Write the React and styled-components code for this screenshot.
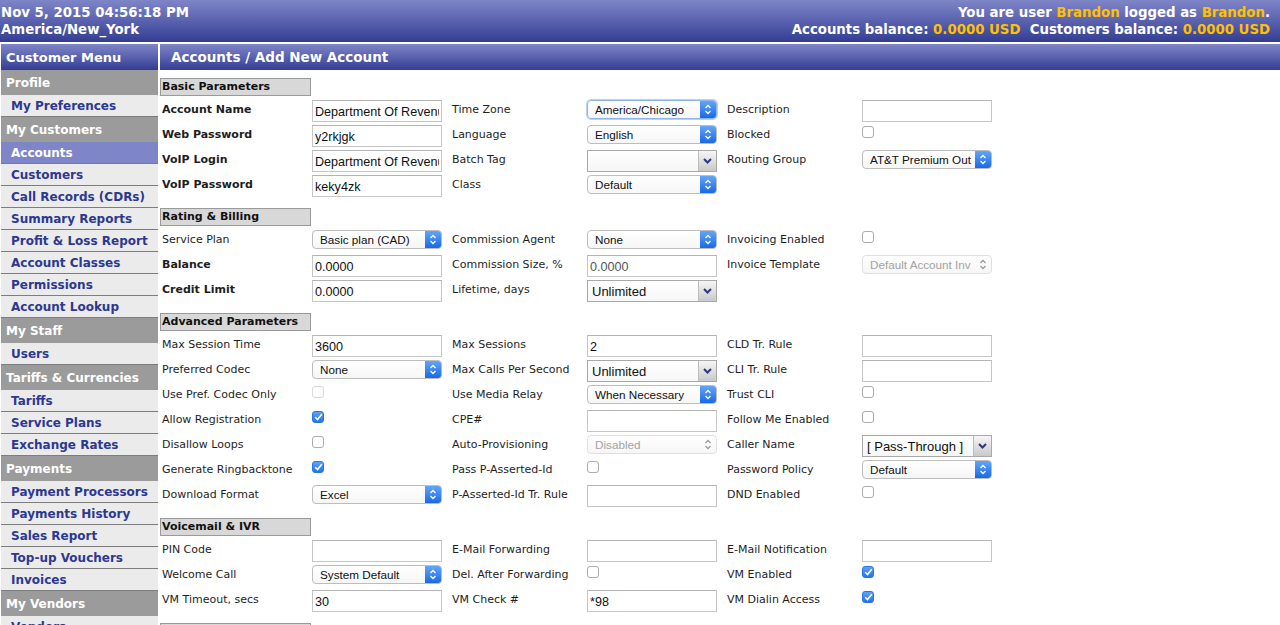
import React from "react";
import styled, { createGlobalStyle, css } from "styled-components";

const GlobalStyle = createGlobalStyle`
  html, body { margin: 0; padding: 0; background: #fff; overflow: hidden; }
  body { font-family: "DejaVu Sans", Verdana, sans-serif; }
`;

const barGradient = css`
  background: linear-gradient(to bottom, #7e85c7 0%, #5a62af 50%, #333d92 100%);
`;

const TopBar = styled.div`
  ${barGradient};
  height: 42px;
  box-sizing: border-box;
  padding: 4px 10px 0 1px;
  display: flex;
  justify-content: space-between;
  color: #fff;
  font-weight: bold;
  font-size: 13.3px;
  line-height: 17px;
`;

const TopRight = styled.div`
  text-align: right;
`;

const Gold = styled.span`
  color: #ffc000;
`;

const Layout = styled.div`
  display: flex;
  gap: 2px;
  margin-top: 2px;
  padding-left: 1px;
`;

const Sidebar = styled.div`
  width: 157px;
  flex: none;
`;

const BarTitle = styled.div`
  ${barGradient};
  height: 26px;
  box-sizing: border-box;
  padding-top: 1px;
  line-height: 25px;
  color: #fff;
  font-weight: bold;
  font-size: ${(p) => p.$size}px;
  padding-left: ${(p) => p.$pad}px;
`;

const MenuHeader = styled.div`
  height: 25px;
  box-sizing: border-box;
  padding-top: 1px;
  line-height: 24px;
  background: #9b9b9b;
  color: #fff;
  font-weight: bold;
  font-size: 12px;
  padding-left: 5px;
`;

const MenuItem = styled.div`
  height: 22px;
  box-sizing: border-box;
  padding-top: 1px;
  line-height: 20px;
  border-bottom: 1px solid #7d7d7d;
  background: ${(p) => (p.$active ? "#7f86c8" : "#ebebeb")};
  color: ${(p) => (p.$active ? "#fff" : "#2c3892")};
  font-weight: bold;
  font-size: 12px;
  padding-left: 10px;
`;

const Main = styled.div`
  flex: 1;
`;

const Content = styled.div`
  padding-top: 8px;
`;

const SectionTitle = styled.div`
  width: 151px;
  height: 18px;
  box-sizing: border-box;
  border: 1px solid #9a9a9a;
  background: #d8d8d8;
  color: #111;
  font-weight: bold;
  font-size: 11px;
  line-height: 16px;
  padding-left: 1px;
  margin-bottom: 1px;
`;

const Grid = styled.div`
  display: grid;
  grid-template-columns: 152px 138px 137px 138px 137px 140px;
  grid-auto-rows: 25px;
  align-items: center;
  margin-bottom: 11px;
`;

const Label = styled.div`
  font-size: 11px;
  color: #1e1e1e;
  font-weight: ${(p) => (p.$bold ? "bold" : "normal")};
  padding-left: 2px;
  white-space: nowrap;
`;

const TextInput = styled.input`
  width: 130px;
  height: 22px;
  box-sizing: border-box;
  border: 1px solid #c6c6c6;
  border-top-color: #b4b4b4;
  padding: 3px 2px 0;
  margin: 2px 0 0;
  font-family: "Liberation Sans", Arial, sans-serif;
  font-size: 12.6px;
  color: ${(p) => (p.$muted ? "#555" : "#111")};
  background: #fff;
  outline: none;
`;

const SelectBox = styled.div`
  width: 130px;
  height: ${(p) => (p.$kind === "combo" ? 22 : 19)}px;
  box-sizing: border-box;
  display: flex;
  align-items: stretch;
  margin-top: ${(p) => (p.$kind === "combo" ? 3 : 0)}px;
  border: 1px solid ${(p) => (p.$kind === "combo" ? "#a9a9a9" : p.$kind === "disabled" ? "#e0e0e0" : p.$focus ? "#8fb3ea" : "#bdbdbd")};
  border-radius: ${(p) => (p.$kind === "combo" ? 0 : 4)}px;
  box-shadow: ${(p) => (p.$focus ? "0 0 0 1px #b8d0f4" : "none")};
  background: linear-gradient(to bottom, #fff, #f6f6f6);
  font-family: "Liberation Sans", Arial, sans-serif;
  font-size: ${(p) => (p.$kind === "combo" ? 13 : 11.7)}px;
  color: ${(p) => (p.$kind === "disabled" ? "#a3a3a3" : "#111")};
  overflow: hidden;
`;

const SelectText = styled.span`
  flex: 1;
  display: flex;
  align-items: center;
  padding-left: ${(p) => (p.$combo ? 4 : 7)}px;
  white-space: nowrap;
  overflow: hidden;
`;

const Stepper = styled.span`
  width: 16px;
  flex: none;
  display: flex;
  align-items: center;
  justify-content: center;
  background: ${(p) => (p.$gray ? "transparent" : "linear-gradient(to bottom, #62a6fa, #1a69e6)")};
`;

const ComboButton = styled.span`
  width: 17px;
  flex: none;
  display: flex;
  align-items: center;
  justify-content: center;
  border-left: 1px solid #bcbcbc;
  background: linear-gradient(to bottom, #f6f6f6, #c9c9c9);
`;

const Check = styled.span`
  width: 12px;
  height: 12px;
  box-sizing: border-box;
  margin-bottom: 6px;
  border-radius: 3px;
  display: flex;
  align-items: center;
  justify-content: center;
  border: 1px solid ${(p) => (p.$on ? "#2a74dc" : p.$disabled ? "#dadada" : "#acacac")};
  background: ${(p) => (p.$on ? "linear-gradient(to bottom, #5ea3f8, #2473ea)" : "#fff")};
`;

const UpDown = ({ color }) => (
  <svg width="8" height="11" viewBox="0 0 8 11">
    <path d="M1.5 4 L4 1.5 L6.5 4 M1.5 7 L4 9.5 L6.5 7" fill="none" stroke={color} strokeWidth="1.3" />
  </svg>
);

const Select = ({ value = "", kind = "mac", focus }) => {
  if (kind === "combo") {
    return (
      <SelectBox $kind="combo">
        <SelectText $combo>{value}</SelectText>
        <ComboButton>
          <svg width="9" height="6" viewBox="0 0 9 6">
            <path d="M1 1 L4.5 4.5 L8 1" fill="none" stroke="#2b3a7c" strokeWidth="2" />
          </svg>
        </ComboButton>
      </SelectBox>
    );
  }
  return (
    <SelectBox $kind={kind} $focus={focus}>
      <SelectText>{value}</SelectText>
      <Stepper $gray={kind === "disabled"}>
        <UpDown color={kind === "disabled" ? "#9a9a9a" : "#fff"} />
      </Stepper>
    </SelectBox>
  );
};

const Checkbox = ({ on, disabled }) => (
  <Check $on={on} $disabled={disabled}>
    {on && (
      <svg width="9" height="8" viewBox="0 0 9 8">
        <path d="M1.2 4.2 L3.5 6.5 L7.8 1.2" fill="none" stroke="#fff" strokeWidth="1.6" />
      </svg>
    )}
  </Check>
);

const Field = ({ f }) => {
  if (!f) return <span />;
  switch (f.t) {
    case "input":
      return <TextInput defaultValue={f.v || ""} $muted={f.muted} />;
    case "select":
      return <Select value={f.v} kind={f.kind} focus={f.focus} />;
    case "check":
      return <Checkbox on={f.on} disabled={f.disabled} />;
    default:
      return <span />;
  }
};

const menu = [
  { head: "Profile", items: ["My Preferences"] },
  {
    head: "My Customers",
    items: ["Accounts", "Customers", "Call Records (CDRs)", "Summary Reports", "Profit & Loss Report", "Account Classes", "Permissions", "Account Lookup"],
  },
  { head: "My Staff", items: ["Users"] },
  { head: "Tariffs & Currencies", items: ["Tariffs", "Service Plans", "Exchange Rates"] },
  { head: "Payments", items: ["Payment Processors", "Payments History", "Sales Report", "Top-up Vouchers", "Invoices"] },
  { head: "My Vendors", items: ["Vendors"] },
];

const inp = (v, extra) => ({ t: "input", v, ...extra });
const sel = (v, kind = "mac", extra) => ({ t: "select", v, kind, ...extra });
const chk = (on, extra) => ({ t: "check", on, ...extra });

const sections = [
  {
    title: "Basic Parameters",
    rows: [
      [["Account Name", inp("Department Of Revenue"), true], ["Time Zone", sel("America/Chicago", "mac", { focus: true })], ["Description", inp("")]],
      [["Web Password", inp("y2rkjgk"), true], ["Language", sel("English")], ["Blocked", chk(false)]],
      [["VoIP Login", inp("Department Of Revenue"), true], ["Batch Tag", sel("", "combo")], ["Routing Group", sel("AT&T Premium Out")]],
      [["VoIP Password", inp("keky4zk"), true], ["Class", sel("Default")], null],
    ],
  },
  {
    title: "Rating & Billing",
    rows: [
      [["Service Plan", sel("Basic plan (CAD)")], ["Commission Agent", sel("None")], ["Invoicing Enabled", chk(false)]],
      [["Balance", inp("0.0000"), true], ["Commission Size, %", inp("0.0000", { muted: true })], ["Invoice Template", sel("Default Account Inv", "disabled")]],
      [["Credit Limit", inp("0.0000"), true], ["Lifetime, days", sel("Unlimited", "combo")], null],
    ],
  },
  {
    title: "Advanced Parameters",
    rows: [
      [["Max Session Time", inp("3600")], ["Max Sessions", inp("2")], ["CLD Tr. Rule", inp("")]],
      [["Preferred Codec", sel("None")], ["Max Calls Per Second", sel("Unlimited", "combo")], ["CLI Tr. Rule", inp("")]],
      [["Use Pref. Codec Only", chk(false, { disabled: true })], ["Use Media Relay", sel("When Necessary")], ["Trust CLI", chk(false)]],
      [["Allow Registration", chk(true)], ["CPE#", inp("")], ["Follow Me Enabled", chk(false)]],
      [["Disallow Loops", chk(false)], ["Auto-Provisioning", sel("Disabled", "disabled")], ["Caller Name", sel("[ Pass-Through ]", "combo")]],
      [["Generate Ringbacktone", chk(true)], ["Pass P-Asserted-Id", chk(false)], ["Password Policy", sel("Default")]],
      [["Download Format", sel("Excel")], ["P-Asserted-Id Tr. Rule", inp("")], ["DND Enabled", chk(false)]],
    ],
  },
  {
    title: "Voicemail & IVR",
    rows: [
      [["PIN Code", inp("")], ["E-Mail Forwarding", inp("")], ["E-Mail Notification", inp("")]],
      [["Welcome Call", sel("System Default")], ["Del. After Forwarding", chk(false)], ["VM Enabled", chk(true)]],
      [["VM Timeout, secs", inp("30")], ["VM Check #", inp("*98")], ["VM Dialin Access", chk(true)]],
    ],
  },
  { title: "Service Features", rows: [] },
];

const App = () => (
  <>
    <GlobalStyle />
    <TopBar>
      <div>
        <div>Nov 5, 2015 04:56:18 PM</div>
        <div>America/New_York</div>
      </div>
      <TopRight>
        <div>
          You are user <Gold>Brandon</Gold> logged as <Gold>Brandon</Gold>.
        </div>
        <div>
          Accounts balance: <Gold>0.0000 USD</Gold>&nbsp; Customers balance: <Gold>0.0000 USD</Gold>
        </div>
      </TopRight>
    </TopBar>
    <Layout>
      <Sidebar>
        <BarTitle $pad={5} $size={13}>Customer Menu</BarTitle>
        {menu.map((g) => (
          <React.Fragment key={g.head}>
            <MenuHeader>{g.head}</MenuHeader>
            {g.items.map((it) => (
              <MenuItem key={it} $active={it === "Accounts"}>
                {it}
              </MenuItem>
            ))}
          </React.Fragment>
        ))}
      </Sidebar>
      <Main>
        <BarTitle $pad={11} $size={13.5}>Accounts / Add New Account</BarTitle>
        <Content>
          {sections.map((s) => (
            <React.Fragment key={s.title}>
              <SectionTitle>{s.title}</SectionTitle>
              <Grid>
                {s.rows.map((row, ri) =>
                  row.map((cell, ci) =>
                    cell ? (
                      <React.Fragment key={`${ri}-${ci}`}>
                        <Label $bold={cell[2]}>{cell[0]}</Label>
                        <Field f={cell[1]} />
                      </React.Fragment>
                    ) : (
                      <React.Fragment key={`${ri}-${ci}`}>
                        <span />
                        <span />
                      </React.Fragment>
                    )
                  )
                )}
              </Grid>
            </React.Fragment>
          ))}
        </Content>
      </Main>
    </Layout>
  </>
);

export default App;
